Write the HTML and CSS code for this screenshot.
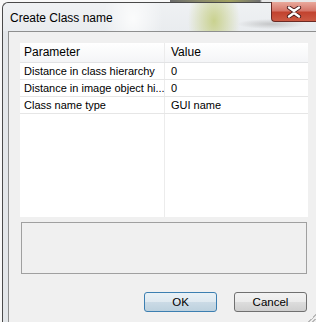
FILE: index.html
```html
<!DOCTYPE html>
<html lang="en">
<head>
    <meta charset="UTF-8">
    <title>Create Class name</title>
    <link rel="stylesheet" href="styles.css">
</head>
<body>
    <div class="screen">
        <div class="frame">
            <div class="titlebar">
                <span class="title">Create Class name</span>
                <div class="close">
                    <svg width="16" height="12" viewBox="0 0 16 12">
                        <path d="M3 1.5 L8 5 L13 1.5 M3 10.5 L8 7 L13 10.5" stroke="#4a1c1c" stroke-width="4.2" fill="none" stroke-linecap="round"/>
                        <path d="M3 1.5 L8 5 L13 1.5 M3 10.5 L8 7 L13 10.5" stroke="#fff" stroke-width="2.4" fill="none" stroke-linecap="round"/>
                    </svg>
                </div>
            </div>

            <div class="client">
                <!-- parameter grid -->
                <div class="grid">
                    <div class="row head">
                        <div class="cell">Parameter</div>
                        <div class="cell">Value</div>
                    </div>
                    <div class="row">
                        <div class="cell">Distance in class hierarchy</div>
                        <div class="cell">0</div>
                    </div>
                    <div class="row">
                        <div class="cell">Distance in image object hi...</div>
                        <div class="cell">0</div>
                    </div>
                    <div class="row">
                        <div class="cell">Class name type</div>
                        <div class="cell">GUI name</div>
                    </div>
                    <div class="row filler">
                        <div class="cell"></div>
                        <div class="cell"></div>
                    </div>
                </div>

                <div class="desc"></div>

                <div class="buttons">
                    <button class="btn default">OK</button>
                    <button class="btn">Cancel</button>
                </div>
            </div>
            <div class="grip"></div>
        </div>
    </div>
</body>
</html>
```

FILE: styles.css
```css
body {
    margin: 0;
    padding: 0;
    background-color: #f8f8f8;
    font-family: 'Liberation Sans', Arial, sans-serif;
    overflow: hidden;
}

.screen {
    width: 316px;
    height: 322px;
    padding: 2px 0 0 2px;
    box-sizing: border-box;
    background: linear-gradient(to right, #f8f8f8 0, #f8f8f8 170px, #6a6a6a 170px, #8a8a6a 200px, #a0a060 230px, #707070 260px, #e8e8e8 262px);
    overflow: hidden;
}

.frame {
    position: relative;
    height: 320px;
    border-left: 1px solid #4a4a4a;
    border-top: 1px solid #4a4a4a;
    border-top-left-radius: 6px;
    background-color: #e3e6e9;
    display: flex;
    flex-direction: column;
}

/* Title bar */
.titlebar {
    height: 28px;
    display: flex;
    align-items: flex-start;
    border-top-left-radius: 6px;
    background:
        radial-gradient(ellipse 26px 40px at 211px 18px, rgba(190, 200, 110, 0.75), rgba(190, 200, 110, 0) 100%),
        radial-gradient(ellipse 34px 5px at 268px 21px, rgba(150, 150, 150, 0.45), rgba(150, 150, 150, 0)),
        radial-gradient(ellipse 30px 40px at 130px 16px, rgba(255, 255, 255, 0.8), rgba(255, 255, 255, 0)),
        linear-gradient(to bottom, #eff1f3, #e9ecef);
}

.title {
    font-size: 12px;
    color: #000;
    padding: 8px 0 0 7px;
}

.close {
    margin-left: auto;
    margin-top: -1px;
    width: 44px;
    height: 19px;
    border: 1px solid #6b2a24;
    border-right: none;
    border-top: none;
    border-bottom-left-radius: 4px;
    background: linear-gradient(to bottom, #e9a99c 0, #d6776a 45%, #c2432f 55%, #cc5a44 100%);
    display: flex;
    align-items: center;
    justify-content: center;
}

/* Client area */
.client {
    flex: 1;
    margin-left: 5px;
    border-left: 1px solid #8e8f8f;
    border-top: 1px solid #8e8f8f;
    background-color: #f0f0f0;
    padding: 11px 0 0 11px;
    display: flex;
    flex-direction: column;
}

.grid {
    width: 288px;
    height: 174px;
    background-color: #fff;
    display: flex;
    flex-direction: column;
    font-size: 11px;
}

.row {
    display: flex;
    height: 16px;
    border-bottom: 1px solid #e6e6e6;
    line-height: 16px;
}

.row .cell:first-child {
    width: 145px;
    box-sizing: border-box;
    border-right: 1px solid #ececec;
}

.cell {
    padding-left: 4px;
    white-space: nowrap;
}

.row .cell + .cell {
    padding-left: 6px;
}

.row.head {
    height: 19px;
    line-height: 19px;
    font-size: 12px;
    background: linear-gradient(to bottom, #ffffff, #f4f5f7);
    border-bottom: 1px solid #e2e3e5;
}

.row.filler {
    flex: 1;
    border-bottom: none;
}

.desc {
    width: 284px;
    height: 50px;
    margin: 5px 0 0 1px;
    border: 1px solid #a0a0a0;
    background-color: #f0f0f0;
}

.buttons {
    width: 287px;
    display: flex;
    justify-content: flex-end;
    gap: 17px;
    margin-top: 18px;
}

.btn {
    width: 73px;
    height: 20px;
    font-family: 'Liberation Sans', Arial, sans-serif;
    font-size: 11.5px;
    color: #000;
    border: 1px solid #707070;
    border-radius: 3px;
    background: linear-gradient(to bottom, #f2f2f2 0, #ebebeb 50%, #dddddd 50%, #cfcfcf 100%);
    padding: 0;
}

.btn.default {
    border-color: #3c7fb1;
    background: linear-gradient(to bottom, #e9f1f6 0, #dfe9f0 50%, #cbdbe6 50%, #bdd1de 100%);
}

.grip {
    position: absolute;
    right: 0;
    bottom: 0;
    width: 10px;
    height: 10px;
    background: linear-gradient(135deg, transparent 0, transparent 55%, #b8b8b8 55%, #b8b8b8 62%, transparent 62%, transparent 75%, #b8b8b8 75%, #b8b8b8 82%, transparent 82%);
}
```
